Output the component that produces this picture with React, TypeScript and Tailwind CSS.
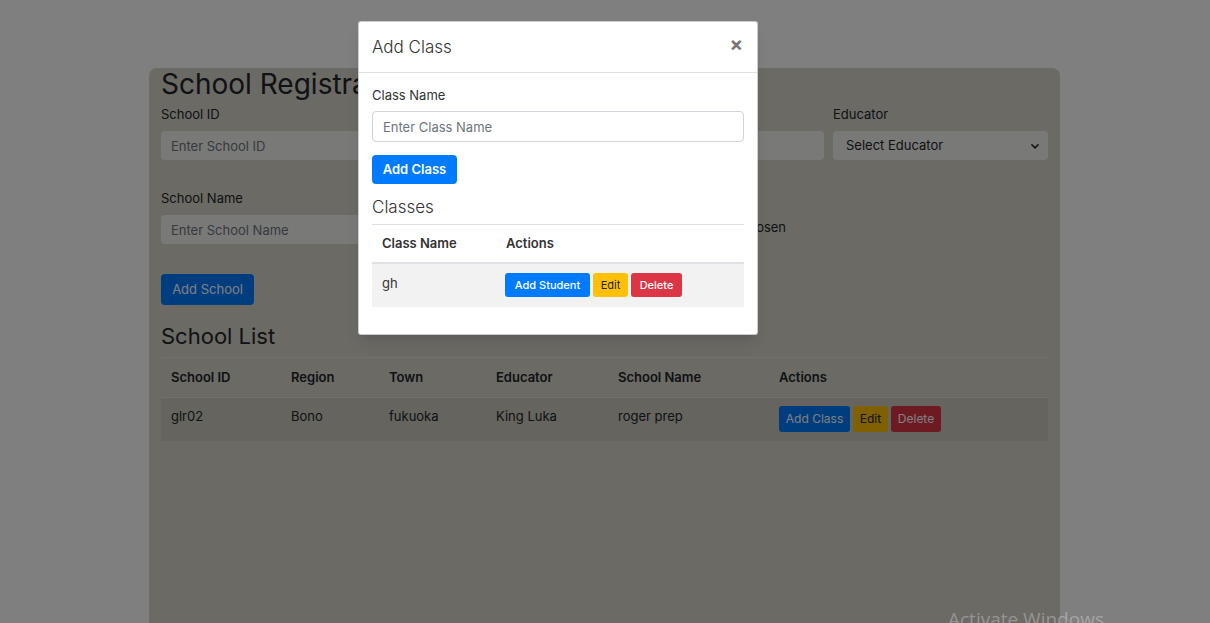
import React from "react";

const FONT = { fontFamily: "Inter, 'Noto Sans', sans-serif" };

function Field({ label, children }: { label?: string; children: React.ReactNode }) {
  return (
    <div className="flex flex-col">
      <label className="text-[13px] leading-5 text-[#212529] h-5">{label}</label>
      <div className="mt-[7px]">{children}</div>
    </div>
  );
}

function TextBox({ placeholder }: { placeholder: string }) {
  return (
    <input
      placeholder={placeholder}
      className="w-full h-[29px] rounded bg-[#f3f2ee] px-[10px] text-[13px] text-[#495057] placeholder:text-[#6c757d] outline-none"
    />
  );
}

export default function App() {
  const schools = [
    { id: "glr02", region: "Bono", town: "fukuoka", educator: "King Luka", name: "roger prep" },
  ];

  return (
    <div className="relative h-[623px] w-full overflow-hidden bg-white" style={FONT}>
      {/* page */}
      <div className="pt-[68px]">
        <div className="ml-[149px] w-[911px] h-[600px] rounded-lg bg-[#d6d4ca] px-3">
          <h2 className="text-[28px] leading-[32px] text-[#212529] font-normal">School Registration</h2>

          <div className="mt-1 grid grid-cols-4 gap-x-[9px] gap-y-[28px]">
            <Field label="School ID">
              <TextBox placeholder="Enter School ID" />
            </Field>
            <Field label="Region">
              <TextBox placeholder="Enter Region" />
            </Field>
            <Field label="Town">
              <TextBox placeholder="Enter Town" />
            </Field>
            <Field label="Educator">
              <div className="flex h-[29px] items-center justify-between rounded bg-[#f3f2ee] pl-[13px] pr-[8px] text-[13px] text-[#212529]">
                <span>Select Educator</span>
                <svg width="10" height="10" viewBox="0 0 16 16" fill="none" stroke="#212529" strokeWidth="2.5" strokeLinecap="round" strokeLinejoin="round">
                  <path d="M3 6l5 5 5-5" />
                </svg>
              </div>
            </Field>
            <Field label="School Name">
              <TextBox placeholder="Enter School Name" />
            </Field>
            <Field label="Phone">
              <TextBox placeholder="Enter Phone" />
            </Field>
            <Field label="Logo">
              <div className="flex h-[26px] items-center gap-[6px] pl-[0px] text-[13px] text-[#212529]">
                <span className="rounded-sm border border-[#767676] bg-[#efefef] px-1 py-[1px]">Choose File</span>
                <span>No file chosen</span>
              </div>
            </Field>
            <div />
          </div>

          <button className="mt-[30px] h-[31px] w-[93px] rounded bg-[#007bff] text-[13px] text-white">Add School</button>

          <h3 className="mt-[17px] text-[22px] leading-[28px] text-[#212529] pb-[7px]">School List</h3>

          <table className="w-full text-[13px] text-[#212529] border-collapse">
            <thead>
              <tr className="border-t border-[#e4e2da] h-[40px] text-left">
                <th className="pl-[10px] w-[120px] font-semibold">School ID</th>
                <th className="pl-[10px] w-[98px] font-semibold">Region</th>
                <th className="pl-[10px] w-[107px] font-semibold">Town</th>
                <th className="pl-[10px] w-[122px] font-semibold">Educator</th>
                <th className="pl-[10px] w-[161px] font-semibold">School Name</th>
                <th className="pl-[10px] font-semibold">Actions</th>
              </tr>
            </thead>
            <tbody>
              {schools.map((s) => (
                <tr key={s.id} className="h-[43px] bg-black/5 border-t border-[#e4e2da]">
                  <td className="pl-[10px] align-top pt-[9px]">{s.id}</td>
                  <td className="pl-[10px] align-top pt-[9px]">{s.region}</td>
                  <td className="pl-[10px] align-top pt-[9px]">{s.town}</td>
                  <td className="pl-[10px] align-top pt-[9px]">{s.educator}</td>
                  <td className="pl-[10px] align-top pt-[9px]">{s.name}</td>
                  <td className="pl-[10px]">
                    <div className="flex gap-[3px] text-[12px]">
                      <button className="h-[26px] w-[71px] rounded-[3px] bg-[#007bff] text-white">Add Class</button>
                      <button className="h-[26px] w-[35px] rounded-[3px] bg-[#ffc107] text-[#212529]">Edit</button>
                      <button className="h-[26px] w-[50px] rounded-[3px] bg-[#dc3545] text-white">Delete</button>
                    </div>
                  </td>
                </tr>
              ))}
            </tbody>
          </table>
        </div>
      </div>

      {/* backdrop */}
      <div className="absolute inset-0 bg-black/50" />

      {/* modal */}
      <div className="absolute left-[358px] top-[21px] w-[400px] rounded-[3px] border border-black/20 bg-white shadow-lg">
        <div className="flex h-[51px] items-center justify-between border-b border-[#dee2e6] pl-[13px] pr-[14px]">
          <h5 className="text-[17px] font-light text-[#333] mt-[1px]">Add Class</h5>
          <span className="text-[20px] font-bold leading-none text-[#777] -mt-[6px]">×</span>
        </div>
        <div className="px-[13px] pt-[13px] pb-[27px]">
          <label className="block text-[13px] leading-[18px] text-[#333]">Class Name</label>
          <input
            placeholder="Enter Class Name"
            className="mt-[7px] block h-[31px] w-full rounded border border-[#ced4da] px-[10px] text-[13px] placeholder:text-[#6c757d] outline-none"
          />
          <button className="mt-[13px] h-[29px] w-[85px] rounded bg-[#007bff] text-[13px] font-semibold text-white">Add Class</button>

          <h5 className="mt-[11px] text-[17px] leading-[24px] font-light text-[#333] pb-[5px]">Classes</h5>
          <table className="w-full border-collapse text-[13px] text-[#333]">
            <thead>
              <tr className="h-[38px] border-t border-b-2 border-[#dee2e6] text-left">
                <th className="w-[124px] pl-[10px] font-semibold">Class Name</th>
                <th className="pl-[10px] font-semibold">Actions</th>
              </tr>
            </thead>
            <tbody>
              <tr className="h-[44px] bg-[#f2f2f2]">
                <td className="pl-[10px] align-top pt-[10px]">gh</td>
                <td className="pl-[9px]">
                  <div className="flex gap-[3px] text-[11px] font-medium">
                    <button className="h-[24px] w-[85px] rounded-[3px] bg-[#007bff] text-white">Add Student</button>
                    <button className="h-[24px] w-[35px] rounded-[3px] bg-[#ffc107] text-[#212529] font-normal">Edit</button>
                    <button className="h-[24px] w-[51px] rounded-[3px] bg-[#dc3545] text-white">Delete</button>
                  </div>
                </td>
              </tr>
            </tbody>
          </table>
        </div>
      </div>

      {/* windows watermark */}
      <div
        className="absolute left-[948px] top-[605px] text-[19px] text-white/30 whitespace-nowrap"
        style={{ fontFamily: "'Open Sans', sans-serif" }}
      >
        Activate Windows
      </div>
    </div>
  );
}
